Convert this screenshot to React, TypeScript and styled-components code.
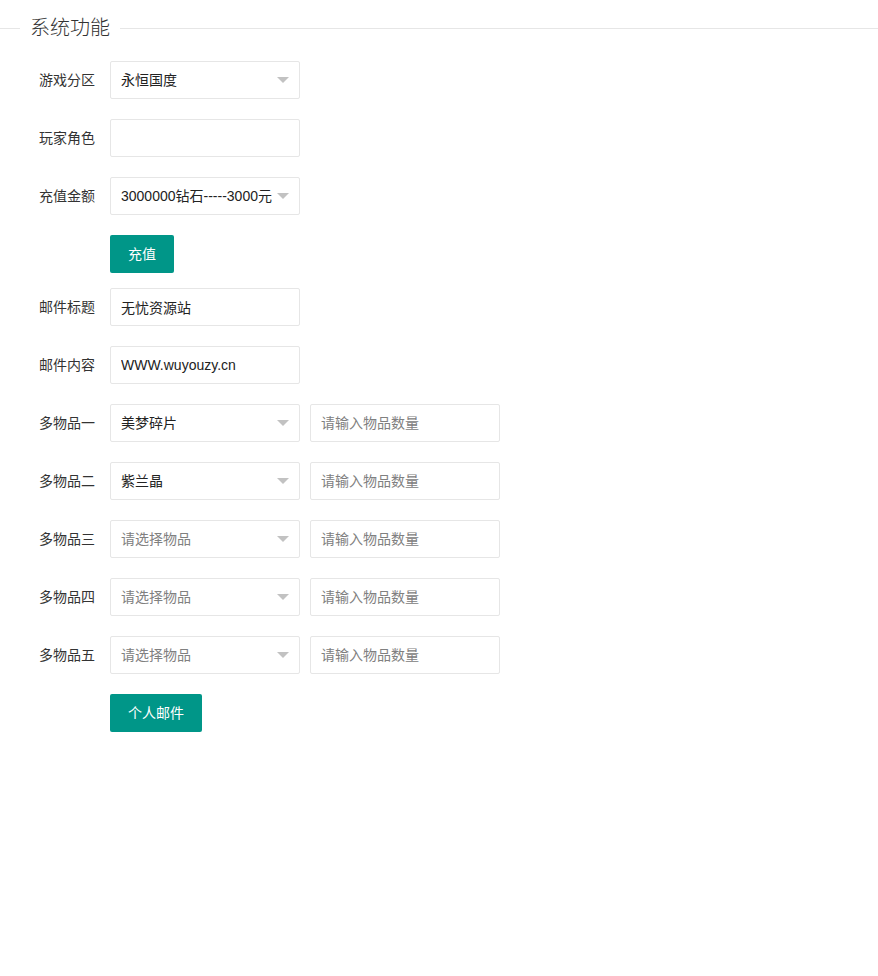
import React from 'react';
import styled, { createGlobalStyle } from 'styled-components';

const GlobalStyle = createGlobalStyle`
    html, body {
        margin: 0;
        padding: 0;
        background: #fff;
    }
    body {
        font: 14px "Liberation Sans", "Noto Sans CJK SC", sans-serif;
        color: #333;
    }
    * {
        box-sizing: border-box;
    }
`;

const Page = styled.div`
    width: 878px;
    min-height: 976px;
`;

const TitleField = styled.fieldset`
    margin: 13px 0 18px;
    padding: 0;
    border: none;
    border-top: 1px solid #e6e6e6;
    min-width: 0;
`;

const Legend = styled.legend`
    margin-left: 20px;
    padding: 0 10px;
    font-size: 20px;
    line-height: 30px;
    font-weight: 300;
    color: #333;
`;

const Form = styled.form`
    display: block;
`;

const FormItem = styled.div<{ $inline?: boolean }>`
    display: flex;
    align-items: flex-start;
    margin-bottom: ${(p) => (p.$inline ? '20px' : '15px')};
`;

const Label = styled.label`
    width: 110px;
    padding: 9px 15px;
    line-height: 20px;
    text-align: right;
    color: #333;
    flex-shrink: 0;
`;

const ButtonBlock = styled.div`
    margin-left: 110px;
`;

const Controls = styled.div`
    display: flex;
    gap: 10px;
`;

const Input = styled.input`
    width: 190px;
    height: 38px;
    padding-left: 10px;
    border: 1px solid #e6e6e6;
    border-radius: 2px;
    background: #fff;
    font: inherit;
    color: #222;
    outline: none;

    &::placeholder {
        color: #808080;
    }
`;

const Select = styled.div<{ $empty?: boolean }>`
    position: relative;
    width: 190px;
    height: 38px;
    padding: 0 30px 0 10px;
    border: 1px solid #e6e6e6;
    border-radius: 2px;
    background: #fff;
    line-height: 36px;
    white-space: nowrap;
    overflow: hidden;
    color: ${(p) => (p.$empty ? '#808080' : '#222')};
    cursor: pointer;
`;

const Arrow = styled.i`
    position: absolute;
    right: 10px;
    top: 50%;
    margin-top: -3px;
    width: 0;
    height: 0;
    border-width: 6px;
    border-style: solid;
    border-color: #c2c2c2 transparent transparent;
    border-bottom-width: 0;
`;

const Button = styled.button`
    height: 38px;
    padding: 0 18px;
    border: none;
    border-radius: 2px;
    background: #009688;
    color: #fff;
    font: inherit;
    line-height: 38px;
    cursor: pointer;
`;

const SelectBox = ({ value, placeholder }: { value?: string; placeholder?: string }) => (
    <Select $empty={!value}>
        {value || placeholder}
        <Arrow />
    </Select>
);

const items = [
    { label: '多物品一', value: '美梦碎片' },
    { label: '多物品二', value: '紫兰晶' },
    { label: '多物品三', value: '' },
    { label: '多物品四', value: '' },
    { label: '多物品五', value: '' },
];

const App = () => (
    <Page>
        <GlobalStyle />
        <TitleField>
            <Legend>系统功能</Legend>
        </TitleField>
        <Form onSubmit={(e) => e.preventDefault()}>
            <FormItem $inline>
                <Label>游戏分区</Label>
                <SelectBox value="永恒国度" />
            </FormItem>
            <FormItem $inline>
                <Label>玩家角色</Label>
                <Input type="text" />
            </FormItem>
            <FormItem $inline>
                <Label>充值金额</Label>
                <SelectBox value="3000000钻石-----3000元" />
            </FormItem>
            <FormItem>
                <ButtonBlock>
                    <Button type="button">充值</Button>
                </ButtonBlock>
            </FormItem>
            <FormItem $inline>
                <Label>邮件标题</Label>
                <Input type="text" defaultValue="无忧资源站" />
            </FormItem>
            <FormItem $inline>
                <Label>邮件内容</Label>
                <Input type="text" defaultValue="WWW.wuyouzy.cn" />
            </FormItem>
            {items.map((item) => (
                <FormItem $inline key={item.label}>
                    <Label>{item.label}</Label>
                    <Controls>
                        <SelectBox value={item.value} placeholder="请选择物品" />
                        <Input type="text" placeholder="请输入物品数量" />
                    </Controls>
                </FormItem>
            ))}
            <FormItem>
                <ButtonBlock>
                    <Button type="button">个人邮件</Button>
                </ButtonBlock>
            </FormItem>
        </Form>
    </Page>
);

export default App;
